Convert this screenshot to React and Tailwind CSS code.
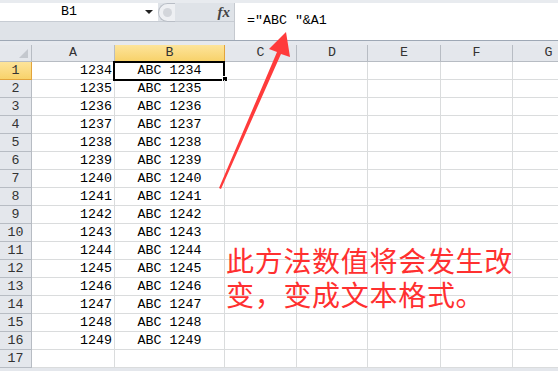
import React from "react";

const colLetters = ["A", "B", "C", "D", "E", "F", "G"];
const rows = Array.from({ length: 17 }, (_, i) => i + 1);

const gridCols = "grid grid-cols-[32px_83px_110px_72px_71px_73px_72px_72px]";
const mono = { fontFamily: '"Liberation Mono", "DejaVu Sans Mono", monospace' };

const FormulaBar = () => (
  <div className="relative h-[40px] bg-[#dfe3e8] border-t-[3px] border-[#e8ebef] flex">
    <div className="flex flex-col w-[234px]">
      <div className="h-[19px] flex items-stretch border-b border-[#c7ccd3]">
        <div className="w-[158px] bg-white flex items-center relative">
          <span className="w-[138px] text-center text-[13.3px] text-black" style={mono}>
            B1
          </span>
          <span className="absolute left-[145px] top-[7px] w-0 h-0 border-l-[4px] border-r-[4px] border-t-[4px] border-l-transparent border-r-transparent border-t-[#222]" />
        </div>
        <div className="flex-1 flex items-center relative">
          <div className="w-[17px] h-[19px] rounded-l-full border border-r-0 border-[#b9bec6] bg-[#eef0f3] flex items-center justify-center">
            <div className="w-[9px] h-[9px] rounded-full bg-[#d3d6db]" />
          </div>
          <span
            className="ml-auto mr-[4px] text-[15px] italic font-bold text-[#444] leading-none"
            style={{ fontFamily: '"Liberation Serif", serif' }}
          >
            fx
          </span>
        </div>
      </div>
    </div>
    <div className="flex-1 bg-white border-l border-[#c5c9cf] pl-[12px] pt-[3px]">
      <span className="text-[13.3px] text-black" style={mono}>
        ="ABC "&A1
      </span>
    </div>
  </div>
);

const Sheet = () => (
  <div className={gridCols + " bg-white"}>
    <div className="h-[17px] bg-[#e4e7ec] border-r border-b border-[#b7bcc3] relative">
      <span className="absolute right-[3px] bottom-[3px] w-0 h-0 border-b-[9px] border-l-[9px] border-l-transparent border-b-[#c4c8ce]" />
    </div>
    {colLetters.map((c) => (
      <div
        key={c}
        className={
          c === "B"
            ? "h-[17px] bg-gradient-to-b from-[#fde49a] to-[#f8d26a] border-r border-b border-[#e2a43c] flex items-center justify-center text-[13.3px] text-[#333]"
            : "h-[17px] bg-[#e4e7ec] border-r border-b border-[#b7bcc3] flex items-center justify-center text-[13.3px] text-[#333]"
        }
        style={mono}
      >
        {c}
      </div>
    ))}
    {rows.map((r) => (
      <React.Fragment key={r}>
        <div
          className={
            r === 1
              ? "h-[18px] bg-gradient-to-b from-[#fde49a] to-[#f8d26a] border-r border-b border-[#e2a43c] flex items-center justify-center text-[13.3px] text-[#333]"
              : "h-[18px] bg-[#e4e7ec] border-r border-b border-[#b7bcc3] flex items-center justify-center text-[13.3px] text-[#333]"
          }
          style={mono}
        >
          {r}
        </div>
        <div
          className="h-[18px] border-r border-b border-[#dadcdd] flex items-center justify-end pr-[2px] text-[13.3px] text-black"
          style={mono}
        >
          {r <= 16 ? 1233 + r : ""}
        </div>
        <div
          className="h-[18px] border-r border-b border-[#dadcdd] flex items-center justify-center text-[13.3px] text-black relative"
          style={mono}
        >
          {r <= 16 ? `ABC ${1233 + r}` : ""}
          {r === 1 && (
            <>
              <span className="absolute -left-[2px] -top-[1px] w-[112px] h-[20px] border-2 border-black" />
              <span className="absolute -right-[4px] -bottom-[3px] w-[6px] h-[6px] bg-black border border-white" />
            </>
          )}
        </div>
        {[0, 1, 2, 3, 4].map((k) => (
          <div key={k} className="h-[18px] border-r border-b border-[#dadcdd]" />
        ))}
      </React.Fragment>
    ))}
  </div>
);

const Arrow = () => (
  <svg className="absolute left-0 top-0 pointer-events-none" width="558" height="371">
    <polygon
      points="219,188 221,189 281,54 290,57 286,32 269,49 277,52"
      fill="#ff3b3b"
    />
  </svg>
);

export default function App() {
  return (
    <div className="relative w-[558px] h-[371px] overflow-hidden bg-[#e4e7ec]">
      <FormulaBar />
      <div className="h-px bg-[#9ea8b5]" />
      <div className="h-[4px] bg-[#e6e9ee]" />
      <Sheet />
      <Arrow />
      <div
        className="absolute left-[226px] top-[243px] flex flex-col text-[28px] tracking-[0.7px] text-[#ff3030]"
        style={{ fontFamily: '"Noto Sans CJK SC", sans-serif' }}
      >
        <div className="h-[34px] leading-[34px]">此方法数值将会发生改</div>
        <div className="h-[34px] leading-[34px]">变，变成文本格式。</div>
      </div>
    </div>
  );
}
